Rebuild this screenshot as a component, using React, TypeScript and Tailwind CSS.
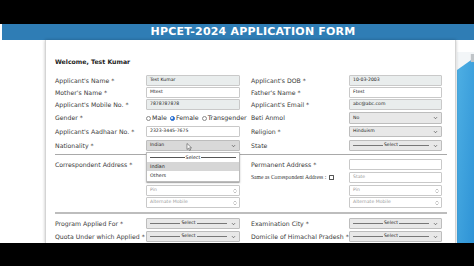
import React from "react";

// ── Field pieces ─────────────────────────────────────────────────────

function TextBox({ value, placeholder, tint, spinner }: { value?: string; placeholder?: string; tint?: boolean; spinner?: boolean }) {
	return (
		<div
			className={`flex h-full w-full items-center justify-between rounded-[1px] border border-[#c9c9c9] pl-[3px] pr-[2px] text-[4.6px] ${
				tint ? "bg-[#e9eded]" : "bg-white"
			}`}
		>
			{value ? (
				<span className="text-[#222]">{value}</span>
			) : (
				<span className="text-[#9a9a9a]">{placeholder}</span>
			)}
			{spinner && (
				<svg width="4" height="6" viewBox="0 0 4 6" className="text-[#9a9a9a]">
					<path d="M0.5 2.5 L2 1 L3.5 2.5 M0.5 3.5 L2 5 L3.5 3.5" fill="none" stroke="currentColor" strokeWidth="0.6" />
				</svg>
			)}
		</div>
	);
}

function SelectBox({ value, hover }: { value?: string; hover?: boolean }) {
	return (
		<div
			className={`flex h-full w-full items-center rounded-[1px] border border-[#bdbdbd] pl-[3px] pr-[3px] text-[4.6px] text-[#222] ${
				hover ? "bg-[#d9d9d9]" : "bg-[#e8e8e8]"
			}`}
		>
			{value ? (
				<span className="flex-1">{value}</span>
			) : (
				<span className="flex flex-1 items-center gap-[1px]">
					<span className="h-px flex-1 bg-[#777]" />
					<span>Select</span>
					<span className="h-px flex-1 bg-[#777]" />
				</span>
			)}
			<svg width="5" height="4" viewBox="0 0 5 4" className="ml-[4px] shrink-0 text-[#555]">
				<path d="M1 1.2 L2.5 2.7 L4 1.2" fill="none" stroke="currentColor" strokeWidth="0.8" />
			</svg>
		</div>
	);
}

function Label({ children, w }: { children?: React.ReactNode; w: string }) {
	return <div className={`${w} shrink-0 whitespace-nowrap text-[6.2px] text-[#3a3a3a]`}>{children}</div>;
}

function Row({ h = "h-[11px]", mt, children }: { h?: string; mt: string; children: React.ReactNode }) {
	return <div className={`flex ${h} ${mt} items-center`}>{children}</div>;
}

function Cell({ children, w }: { children?: React.ReactNode; w: string }) {
	return <div className={`${w} h-full shrink-0`}>{children}</div>;
}

function Radio({ checked, label }: { checked?: boolean; label: string }) {
	return (
		<span className="flex items-center gap-[1px]">
			<span
				className={`flex h-[5px] w-[5px] items-center justify-center rounded-full border-[0.6px] ${
					checked ? "border-[#2a6fd0] bg-[#2a6fd0]" : "border-[#8a8a8a] bg-white"
				}`}
			>
				{checked && <span className="h-[2px] w-[2px] rounded-full bg-white" />}
			</span>
			<span>{label}</span>
		</span>
	);
}

// ── Main Page ────────────────────────────────────────────────────────

export default function App() {
	const L = "w-[91px]";
	const I = "w-[94px]";
	const G = "w-[11px]";
	const R = "w-[98px]";
	const J = "w-[93px]";

	return (
		<div className="flex h-[266px] w-[474px] flex-col overflow-hidden bg-white font-['DejaVu_Sans',sans-serif]">
			<div className="h-[24px] shrink-0 bg-black" />

			{/* Title bar */}
			<div className="ml-[2px] flex h-[16px] shrink-0 items-center justify-center bg-[#2f7db5] pl-[30px] text-[11px] font-bold tracking-[0.2px] text-white">
				HPCET-2024 APPLICATION FORM
			</div>

			<div className="flex min-h-0 flex-1">
				<div className="w-[45px] shrink-0 bg-white" />

				{/* Form card */}
				<div className="relative w-[411px] shrink-0 border-x border-[#d4d4d4] bg-white pl-[9px] shadow-[0_0_3px_rgba(0,0,0,0.25)]">
					<div className="mt-[17px] h-[10px] text-[6.2px] font-bold text-[#222]">Welcome, Test Kumar</div>

					<Row mt="mt-[8px]">
						<Label w={L}>Applicant's Name *</Label>
						<Cell w={I}><TextBox value="Test Kumar" tint /></Cell>
						<Cell w={G} />
						<Label w={R}>Applicant's DOB *</Label>
						<Cell w={J}><TextBox value="10-03-2003" tint /></Cell>
					</Row>
					<Row mt="mt-[1px]">
						<Label w={L}>Mother's Name *</Label>
						<Cell w={I}><TextBox value="Mtest" /></Cell>
						<Cell w={G} />
						<Label w={R}>Father's Name *</Label>
						<Cell w={J}><TextBox value="Ftest" /></Cell>
					</Row>
					<Row mt="mt-[1px]">
						<Label w={L}>Applicant's Mobile No. *</Label>
						<Cell w={I}><TextBox value="7878787878" tint /></Cell>
						<Cell w={G} />
						<Label w={R}>Applicant's Email *</Label>
						<Cell w={J}><TextBox value="abc@abc.com" tint /></Cell>
					</Row>
					<Row mt="mt-[2px]" h="h-[12px]">
						<Label w={L}>Gender *</Label>
						<Cell w={I}>
							<div className="flex h-full items-center gap-[3px] whitespace-nowrap text-[6.3px] text-[#333]">
								<Radio label="Male" />
								<Radio label="Female" checked />
								<Radio label="Transgender" />
							</div>
						</Cell>
						<Cell w={G} />
						<Label w={R}>Beti Anmol</Label>
						<Cell w={J}><SelectBox value="No" /></Cell>
					</Row>
					<Row mt="mt-[2px]">
						<Label w={L}>Applicant's Aadhaar No. *</Label>
						<Cell w={I}><TextBox value="2323-3445-7675" /></Cell>
						<Cell w={G} />
						<Label w={R}>Religion *</Label>
						<Cell w={J}><SelectBox value="Hinduism" /></Cell>
					</Row>
					<Row mt="mt-[3px]">
						<Label w={L}>Nationality *</Label>
						<Cell w={I}><SelectBox value="Indian" hover /></Cell>
						<Cell w={G} />
						<Label w={R}>State</Label>
						<Cell w={J}><SelectBox /></Cell>
					</Row>

					<div className="mt-[3px] h-px w-[392px] bg-[#a9a9a9]" />

					<Row mt="mt-[4px]">
						<Label w={L}>Correspondent Address *</Label>
						<Cell w={I}><TextBox /></Cell>
						<Cell w={G} />
						<Label w={R}>Permanent Address *</Label>
						<Cell w={J}><TextBox /></Cell>
					</Row>
					<Row mt="mt-[2px]">
						<Label w={L} />
						{/* hidden under the open dropdown */}
						<Cell w={I}><TextBox /></Cell>
						<Cell w={G} />
						<div className="flex w-[98px] shrink-0 items-center gap-[3px] whitespace-nowrap font-['Liberation_Serif',serif] text-[5.6px] text-[#333]">
							Same as Correspondent Address :
							<span className="h-[5px] w-[5px] rounded-[0.5px] border-[0.6px] border-[#555] bg-white" />
						</div>
						<Cell w={J}><TextBox placeholder="State" /></Cell>
					</Row>
					<Row mt="mt-[2px]">
						<Label w={L} />
						<Cell w={I}><TextBox placeholder="Pin" spinner /></Cell>
						<Cell w={G} />
						<Label w={R} />
						<Cell w={J}><TextBox placeholder="Pin" spinner /></Cell>
					</Row>
					<Row mt="mt-[1px]">
						<Label w={L} />
						<Cell w={I}><TextBox placeholder="Alternate Mobile" spinner /></Cell>
						<Cell w={G} />
						<Label w={R} />
						<Cell w={J}><TextBox placeholder="Alternate Mobile" spinner /></Cell>
					</Row>

					<div className="mt-[4px] h-[2px] w-[392px] bg-[#bdbdbd]" />

					<Row mt="mt-[4px]">
						<Label w={L}>Program Applied For *</Label>
						<Cell w={I}><SelectBox /></Cell>
						<Cell w={G} />
						<Label w={R}>Examination City *</Label>
						<Cell w={J}><SelectBox /></Cell>
					</Row>
					<Row mt="mt-[2px]">
						<Label w={L}>Quota Under which Applied *</Label>
						<Cell w={I}><SelectBox /></Cell>
						<Cell w={G} />
						<Label w={R}>Domicile of Himachal Pradesh *</Label>
						<Cell w={J}><SelectBox /></Cell>
					</Row>

					{/* Open nationality dropdown */}
					<div className="absolute left-[100px] top-[112px] w-[94px] border border-[#bcbcbc] bg-white text-[4.8px] text-[#222] shadow-[0_1px_2px_rgba(0,0,0,0.2)]">
						<div className="flex h-[9px] items-center gap-[1px] px-[3px]">
							<span className="h-px flex-1 bg-[#555]" />
							<span>Select</span>
							<span className="h-px flex-1 bg-[#555]" />
						</div>
						<div className="flex h-[9px] items-center bg-[#d6d6d6] px-[3px]">Indian</div>
						<div className="flex h-[10px] items-center px-[3px]">Others</div>
					</div>
					{/* mouse pointer */}
					<svg className="absolute left-[140px] top-[103px]" width="6" height="8" viewBox="0 0 6 8">
						<path d="M1 0.5 V6.5 L2.5 5.2 L3.6 7.5 L4.6 7 L3.6 4.8 L5.5 4.8 Z" fill="white" stroke="#333" strokeWidth="0.5" />
					</svg>
				</div>

				{/* Background window on the right */}
				<div className="flex min-w-0 flex-1 flex-col pl-px pt-[12px]">
					<svg className="h-full w-full" viewBox="0 0 16 190" preserveAspectRatio="none">
						<defs>
							<linearGradient id="bg" x1="0" y1="0" x2="1" y2="1">
								<stop offset="0" stopColor="#4fb0e4" />
								<stop offset="1" stopColor="#2e93d6" />
							</linearGradient>
						</defs>
						<rect x="0" y="0" width="16" height="190" fill="url(#bg)" />
						<path d="M0 0 H16 V6 L0 18 Z" fill="#f3f6f8" />
						<rect x="13" y="2" width="3" height="8" fill="#bfc4c8" />
					</svg>
				</div>
			</div>

			<div className="h-[23px] shrink-0 bg-black" />
		</div>
	);
}
